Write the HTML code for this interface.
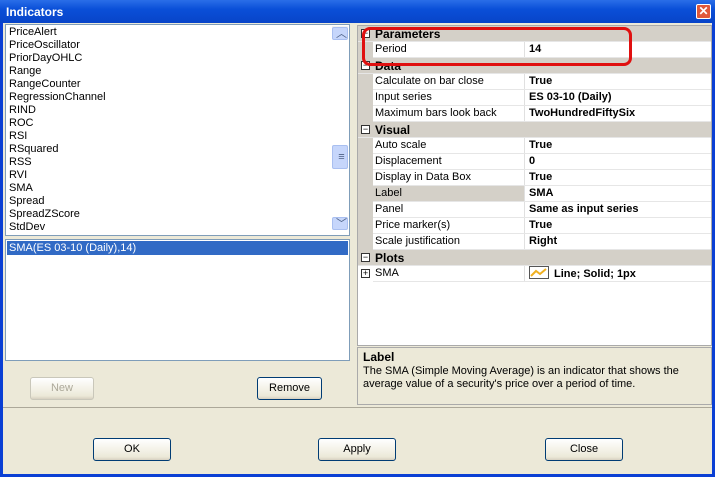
<!DOCTYPE html>
<html><head><style>
*{margin:0;padding:0;box-sizing:border-box}
body{width:715px;height:477px;overflow:hidden;background:#0a3fd4;font-family:"Liberation Sans",sans-serif;font-size:11px;position:relative}
.win{position:absolute;left:3px;top:23px;width:709px;height:451px;background:#ece9d8}
.title{position:absolute;left:0;top:0;width:715px;height:23px;background:linear-gradient(#2a6ee8,#0a4fd8 40%,#0844c8);color:#fff;font-weight:bold;font-size:12px;padding:5px 0 0 6px}
.x{position:absolute;right:4px;top:4px;width:15px;height:15px;background:#e0583a;border:1px solid #fff;border-radius:2px;color:#fff;font-size:12px;line-height:12px;text-align:center}
.abs{position:absolute}
.list{left:5px;top:24px;width:345px;height:212px;background:#fff;border:1px solid #7f9db9}
.list div{height:13px;line-height:13px;padding-left:3px;font-size:11px}
.sb{position:absolute;right:1px;top:1px;width:16px;height:208px;background:#f4f4f0}
.sbb{position:absolute;left:0;width:16px;height:16px;background:#c6d6fb;border:1px solid #a9bff0;border-radius:2px;color:#4d6185;font-size:9px;text-align:center;line-height:14px}
.list2{left:5px;top:239px;width:345px;height:122px;background:#fff;border:1px solid #7f9db9}
.btn{position:absolute;height:23px;border:1px solid #003c74;border-radius:3px;background:linear-gradient(#fff,#ece9d8 85%,#d6d0c0);text-align:center;line-height:21px;font-size:11px}
.grid{left:357px;top:25px;width:355px;height:321px;background:#fff;border:1px solid #aaa}
.row{position:absolute;left:0;width:353px;height:16px;border-bottom:1px solid #e6e6e6}
.cat{background:#d4d0c8;font-weight:bold;font-size:12px}
.gut{position:absolute;left:0;top:0;width:15px;height:16px;background:#d4d0c8}
.n{position:absolute;left:17px;top:1px}
.v{position:absolute;left:166px;top:1px;font-weight:bold;border-left:1px solid #e0e0e0;padding-left:4px;height:15px;top:0;line-height:15px}
.pm{position:absolute;left:3px;top:3px;width:9px;height:9px;border:1px solid #333;background:#fff;font-size:9px;line-height:7px;text-align:center;font-weight:normal}
.desc{left:357px;top:347px;width:355px;height:58px;border:1px solid #aaa;background:#ece9d8;padding:3px 0 0 5px;line-height:13px}
</style></head><body>
<div class="title">Indicators<div class="x">✕</div></div>
<div class="win"></div>
<div class="abs list">
<div style="margin-top:1px">PriceAlert</div><div>PriceOscillator</div><div>PriorDayOHLC</div><div>Range</div><div>RangeCounter</div><div>RegressionChannel</div><div>RIND</div><div>ROC</div><div>RSI</div><div>RSquared</div><div>RSS</div><div>RVI</div><div>SMA</div><div>Spread</div><div>SpreadZScore</div><div>StdDev</div>
<div class="sb"><div class="sbb" style="top:1px">︿</div><div class="sbb" style="top:119px;height:24px;line-height:22px">≡</div><div class="sbb" style="top:191px">﹀</div></div>
</div>
<div class="abs list2"><div style="margin:1px;background:#316ac5;color:#fff;height:14px;line-height:14px;padding-left:2px">SMA(ES 03-10 (Daily),14)</div></div>
<div class="btn" style="left:30px;top:377px;width:64px;color:#aca899;border-color:#c9c7ba">New</div>
<div class="btn" style="left:257px;top:377px;width:65px">Remove</div>
<div class="abs grid">
<div class="row cat" style="top:0"><div class="pm">−</div><span class="n" style="top:1px">Parameters</span></div>
<div class="row" style="top:16px"><div class="gut"></div><span class="n">Period</span><span class="v">14</span></div>
<div class="row cat" style="top:32px"><div class="pm">−</div><span class="n">Data</span></div>
<div class="row" style="top:48px"><div class="gut"></div><span class="n">Calculate on bar close</span><span class="v">True</span></div>
<div class="row" style="top:64px"><div class="gut"></div><span class="n">Input series</span><span class="v">ES 03-10 (Daily)</span></div>
<div class="row" style="top:80px"><div class="gut"></div><span class="n">Maximum bars look back</span><span class="v">TwoHundredFiftySix</span></div>
<div class="row cat" style="top:96px"><div class="pm">−</div><span class="n">Visual</span></div>
<div class="row" style="top:112px"><div class="gut"></div><span class="n">Auto scale</span><span class="v">True</span></div>
<div class="row" style="top:128px"><div class="gut"></div><span class="n">Displacement</span><span class="v">0</span></div>
<div class="row" style="top:144px"><div class="gut"></div><span class="n">Display in Data Box</span><span class="v">True</span></div>
<div class="row" style="top:160px;background:#d4d0c8"><div class="gut"></div><span class="n">Label</span><span class="v" style="background:#fff;width:187px">SMA</span></div>
<div class="row" style="top:176px"><div class="gut"></div><span class="n">Panel</span><span class="v">Same as input series</span></div>
<div class="row" style="top:192px"><div class="gut"></div><span class="n">Price marker(s)</span><span class="v">True</span></div>
<div class="row" style="top:208px"><div class="gut"></div><span class="n">Scale justification</span><span class="v">Right</span></div>
<div class="row cat" style="top:224px"><div class="pm">−</div><span class="n">Plots</span></div>
<div class="row" style="top:240px"><div class="gut" style="background:#fff"><div class="pm">+</div></div><span class="n">SMA</span><span class="v"><svg width="20" height="13" style="vertical-align:-2px;margin-right:5px"><rect x="0.5" y="0.5" width="19" height="12" fill="#fff" stroke="#555"/><path d="M2 10 L7 5 L11 8 L17 3" stroke="#f0b020" stroke-width="2" fill="none"/></svg>Line; Solid; 1px</span></div>
</div>
<div class="abs" style="left:362px;top:27px;width:270px;height:39px;border:3px solid #e01010;border-radius:8px"></div>
<div class="abs desc"><b style="font-size:12px">Label</b><br>The SMA (Simple Moving Average) is an indicator that shows the<br>average value of a security's price over a period of time.</div>
<div class="abs" style="left:3px;top:407px;width:709px;height:1px;background:#fff;border-top:1px solid #aca899"></div>
<div class="btn" style="left:93px;top:438px;width:78px">OK</div>
<div class="btn" style="left:318px;top:438px;width:78px">Apply</div>
<div class="btn" style="left:545px;top:438px;width:78px">Close</div>
</body></html>
